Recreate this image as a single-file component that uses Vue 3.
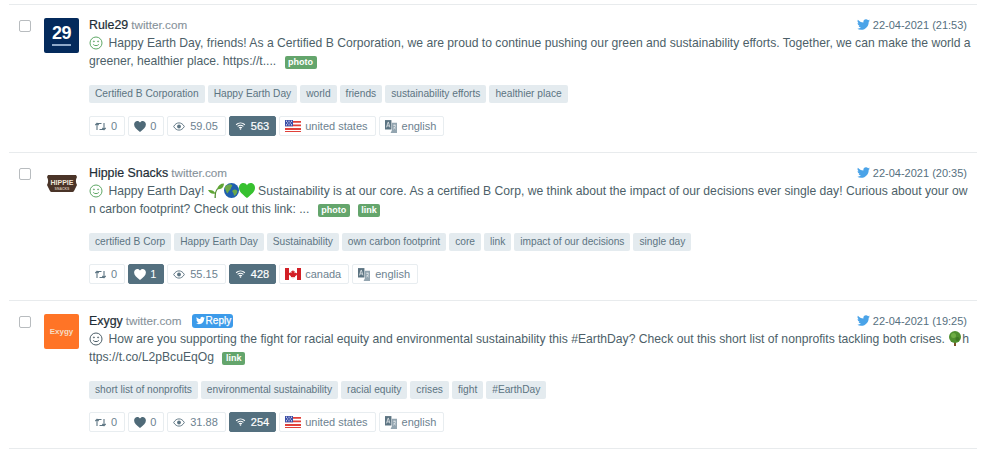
<template>
  <div class="feed">
    <div v-for="post in posts" :key="post.name" class="post">
      <span class="check"></span>
      <div class="avatar" :class="post.logo">
        <template v-if="post.logo === 'rule'">
          <b>29</b><i></i>
        </template>
        <svg v-else-if="post.logo === 'hippie'" width="30" height="17" viewBox="0 0 30 17">
          <path d="M1 0h28l1 2c-1.500 3-1.500 5 0 8l-3 6c-.3.600-.8 1-1.500 1h-21c-.7 0-1.200-.4-1.500-1L0 10c1.500-3 1.500-5 0-8z" fill="#4a3428" />
          <text x="15" y="10" text-anchor="middle" class="hippie-big">HIPPIE</text>
          <text x="15" y="14.500" text-anchor="middle" class="hippie-small">SNACKS</text>
        </svg>
        <b v-else>Exygy</b>
      </div>
      <div class="body">
        <div class="head">
          <div class="source">
            <strong>{{ post.name }}</strong>
            <span class="domain">twitter.com</span>
            <span v-if="post.reply" class="reply">
              <svg width="9" height="9" viewBox="0 0 24 24"><path :d="birdPath" fill="#fff" /></svg>
              Reply
            </span>
          </div>
          <div class="date">
            <svg width="13" height="13" viewBox="0 0 24 24"><path :d="birdPath" fill="#4aa3e8" /></svg>
            {{ post.date }}
          </div>
        </div>
        <p class="text">
          <svg class="mood" :class="{ neutral: post.neutral }" width="14" height="14" viewBox="0 0 14 14" fill="none" stroke="currentColor">
            <circle cx="7" cy="7" r="6" />
            <circle cx="4.900" cy="5.400" r=".5" />
            <circle cx="9.100" cy="5.400" r=".5" />
            <path d="M4.200 8.400c.9 1.600 4.700 1.600 5.600 0" />
          </svg>
          <template v-for="(part, i) in post.text" :key="i">
            <svg v-if="part === 'sprout'" class="emoji" width="16" height="15" viewBox="0 0 16 15">
              <path d="M6.500 15C6.500 11 7 8 9 5.500l1 .6C8 8.500 7.800 11 7.800 15z" fill="#4d8a2c" />
              <path d="M9 6c1-3.500 3.500-5.500 7-5.500-.2 3.500-2.500 6.500-7 5.500z" fill="#5fa535" />
              <path d="M7.500 10.500C6 7.500 3.500 6.500 0 7c1.500 3 4 4.500 7.500 3.500z" fill="#5fa535" />
            </svg>
            <svg v-else-if="part === 'globe'" class="emoji" width="15" height="15" viewBox="0 0 15 15">
              <circle cx="7.500" cy="7.500" r="7.500" fill="#1f5fae" />
              <path d="M3 2c2-1 4-1 5 0 1 1-1 2-1 3s-1 2-2 3-1 3-2 2-1-3-2-4 0-3 2-4zM9 7c1.500-1 3-.5 4 .5s-.5 4-2 5-1-2-2-3-1-1.500 0-2.500z" fill="#6aa84a" />
            </svg>
            <svg v-else-if="part === 'heart'" class="emoji" width="16" height="15" viewBox="0 0 15 14">
              <path d="M7.500 14C3 10.500 0 8 0 4.400 0 1.800 2 0 4.100 0c1.500 0 2.700.8 3.400 2C8.200.8 9.400 0 10.900 0 13 0 15 1.800 15 4.400 15 8 12 10.500 7.500 14z" fill="#37c12f" />
            </svg>
            <svg v-else-if="part === 'tree'" class="emoji tree" width="14" height="15" viewBox="0 0 14 15">
              <path d="M6 9h2v6H6z" fill="#7a4f26" />
              <circle cx="7" cy="6" r="6" fill="#4f8f2f" />
              <circle cx="5.500" cy="4.500" r="2.500" fill="#6fae45" />
              <circle cx="9.500" cy="8" r="2" fill="#3f7a25" />
            </svg>
            <template v-else>{{ part }}</template>
          </template>
          <span v-for="label in post.labels" :key="label" class="label">{{ label }}</span>
        </p>
        <div class="tags">
          <span v-for="tag in post.tags" :key="tag" class="tag">{{ tag }}</span>
        </div>
        <div class="stats">
          <span class="stat">
            <svg width="11" height="9" viewBox="0 0 11 9" fill="none" stroke="currentColor" stroke-width="1.100">
              <path d="M2 8V1.500h4.500M.3 3 2 1.200 3.700 3M9 1v6.500H4.500M7.300 6 9 7.800 10.700 6" />
            </svg>
            <span class="num">{{ post.shares }}</span>
          </span>
          <span class="stat likes" :class="{ active: post.likes > 0 }">
            <svg class="like" width="12" height="11" viewBox="0 0 15 14"><path d="M7.500 14C3 10.500 0 8 0 4.400 0 1.800 2 0 4.100 0c1.500 0 2.700.8 3.400 2C8.200.8 9.400 0 10.900 0 13 0 15 1.800 15 4.400 15 8 12 10.500 7.500 14z" fill="currentColor" /></svg>
            <span class="num">{{ post.likes }}</span>
          </span>
          <span class="stat">
            <svg width="12" height="9" viewBox="0 0 14 10" fill="none" stroke="currentColor" stroke-width="1.100">
              <path d="M.8 5C2.500 2 4.600.8 7 .8S11.500 2 13.200 5C11.500 8 9.400 9.200 7 9.200S2.500 8 .8 5z" />
              <circle cx="7" cy="5" r="2.200" fill="currentColor" stroke="none" />
            </svg>
            <span class="num">{{ post.views }}</span>
          </span>
          <span class="stat active reach">
            <svg width="11" height="8" viewBox="0 0 14 11" fill="none" stroke="currentColor" stroke-width="1.500">
              <path d="M1 3.800C4.500.6 9.500.6 13 3.800M3 6c2.500-2 5.500-2 8 0M5 8c1.200-.8 2.800-.8 4 0" />
              <circle cx="7" cy="9.700" r="1.100" fill="currentColor" stroke="none" />
            </svg>
            <span class="num">{{ post.reach }}</span>
          </span>
          <span class="stat country">
            <svg v-if="post.country === 'canada'" width="16" height="12" viewBox="0 0 16 12">
              <path d="M0 0h16v12H0z" fill="#fff" />
              <path d="M0 0h4v12H0zM12 0h4v12h-4z" fill="#d21f26" />
              <path d="M8 2l.8 1.500 1-.4-.4 2.200 1.300-.9.300.8 1.200-.2-.4 1.400.5.300L10 8.300l.2 1-2-.2V10.500h-.4V9.100l-2 .2.200-1L3.700 6.500l.5-.3-.4-1.400 1.200.2.300-.8 1.300.9-.4-2.200 1 .4z" fill="#d21f26" />
            </svg>
            <svg v-else width="16" height="12" viewBox="0 0 16 12">
              <path d="M0 0h16v12H0z" fill="#fff" />
              <path d="M0 .9h16v1.800H0zM0 4.500h16v1.800H0zM0 8.100h16v1.800H0zM0 11h16v1H0z" fill="#e0413a" />
              <path d="M0 0h8v6.300H0z" fill="#3c4fa8" />
              <path d="M1 1.200h1M3.500 1.200h1M6 1.200h1M2.200 3h1M4.700 3h1M1 4.800h1M3.500 4.800h1M6 4.800h1" stroke="#fff" />
            </svg>
            <span class="num">{{ post.country }}</span>
          </span>
          <span class="stat">
            <svg width="12" height="13" viewBox="0 0 14 15">
              <path d="M0 0h7.500v11H0z" fill="#5c7482" />
              <path d="M8 3h6v12H6.500L8 12z" fill="#93a5b0" />
              <path d="M1.800 8.500 3.500 2.500h.5L5.700 8.500M2.500 6.800h2.500" stroke="#fff" fill="none" stroke-width=".8" />
              <path d="M9.500 6h3M11 5.500v1M9.800 10.500c1.400-.8 2.200-2.200 2.400-4M10.200 8c.5 1 1.300 1.900 2.300 2.500" stroke="#fff" fill="none" stroke-width=".7" />
            </svg>
            <span class="num">english</span>
          </span>
        </div>
      </div>
    </div>
  </div>
</template>

<script setup>
const birdPath =
  'M23.950 4.570a10 10 0 0 1-2.820.770 4.960 4.960 0 0 0 2.160-2.720c-.950.550-2 .950-3.130 1.190a4.920 4.920 0 0 0-8.380 4.480C7.690 8.090 4.070 6.130 1.640 3.160a4.820 4.820 0 0 0-.670 2.480c0 1.710.870 3.210 2.190 4.100a4.900 4.900 0 0 1-2.230-.620v.060a4.920 4.920 0 0 0 3.950 4.830 4.940 4.940 0 0 1-2.210.080 4.940 4.940 0 0 0 4.600 3.420A9.870 9.870 0 0 1 0 19.540a14 14 0 0 0 7.560 2.210c9.050 0 14-7.500 14-13.980 0-.210 0-.420-.010-.630a9.940 9.940 0 0 0 2.400-2.550z'

const posts = [
  {
    name: 'Rule29',
    logo: 'rule',
    date: '22-04-2021 (21:53)',
    text: [' Happy Earth Day, friends! As a Certified B Corporation, we are proud to continue pushing our green and sustainability efforts. Together, we can make the world a greener, healthier place. https://t.... '],
    labels: ['photo'],
    tags: ['Certified B Corporation', 'Happy Earth Day', 'world', 'friends', 'sustainability efforts', 'healthier place'],
    shares: 0,
    likes: 0,
    views: '59.05',
    reach: 563,
    country: 'united states'
  },
  {
    name: 'Hippie Snacks',
    logo: 'hippie',
    date: '22-04-2021 (20:35)',
    text: [' Happy Earth Day! ', 'sprout', 'globe', 'heart', ' Sustainability is at our core. As a certified B Corp, we think about the impact of our decisions ever single day! Curious about your own carbon footprint? Check out this link: ... '],
    labels: ['photo', 'link'],
    tags: ['certified B Corp', 'Happy Earth Day', 'Sustainability', 'own carbon footprint', 'core', 'link', 'impact of our decisions', 'single day'],
    shares: 0,
    likes: 1,
    views: '55.15',
    reach: 428,
    country: 'canada'
  },
  {
    name: 'Exygy',
    logo: 'exygy',
    reply: true,
    neutral: true,
    date: '22-04-2021 (19:25)',
    text: [' How are you supporting the fight for racial equity and environmental sustainability this #EarthDay? Check out this short list of nonprofits tackling both crises. ', 'tree', 'https://t.co/L2pBcuEqOg '],
    labels: ['link'],
    tags: ['short list of nonprofits', 'environmental sustainability', 'racial equity', 'crises', 'fight', '#EarthDay'],
    shares: 0,
    likes: 0,
    views: '31.88',
    reach: 254,
    country: 'united states'
  }
]
</script>

<style scoped>
.feed {
  width: 968px;
  margin: 4px 0 0 9px;
  border-bottom: 1px solid #e8ebed;
  font-family: "Liberation Sans", Arial, sans-serif;
  color: #4d5f69;
}

.post {
  display: flex;
  box-sizing: border-box;
  height: 148px;
  padding-top: 13px;
  border-top: 1px solid #e8ebed;
}

.check {
  flex: none;
  width: 10px;
  height: 10px;
  margin: 2px 13px 0 10px;
  border: 1px solid #b8bcbf;
  border-radius: 2px;
  background: #fff;
}

.avatar {
  flex: none;
  display: flex;
  flex-direction: column;
  align-items: center;
  justify-content: center;
  width: 35px;
  height: 35px;
  margin-right: 10px;
  border-radius: 2px;
}

.avatar.rule {
  background: #042a5c;
  color: #fff;
}

.avatar.rule b {
  font-size: 18px;
  line-height: 17px;
  letter-spacing: -0.5px;
}

.avatar.rule i {
  width: 19px;
  height: 2px;
  margin-top: 2px;
  background: #8fa9c9;
}

.hippie-big {
  fill: #efe6da;
  font-size: 7px;
  font-weight: 700;
}

.hippie-small {
  fill: #cdbfae;
  font-size: 3.500px;
  font-weight: 700;
}

.avatar.exygy {
  background: #ff7426;
  color: #f6dcc4;
  font-size: 8px;
}

.body {
  flex: 1;
  min-width: 0;
}

.head {
  display: flex;
  justify-content: space-between;
  align-items: center;
  height: 15px;
  margin-top: -1px;
}

.source {
  display: flex;
  align-items: center;
  gap: 3px;
  font-size: 12.400px;
}

.source strong {
  font-weight: 400;
  color: #1e2d36;
  -webkit-text-stroke: 0.2px #1e2d36;
}

.domain {
  font-size: 11.700px;
  color: #87929a;
  -webkit-text-stroke: 0.1px #87929a;
}

.reply {
  display: inline-flex;
  align-items: center;
  gap: 1px;
  height: 14px;
  margin-left: 7px;
  padding: 0 2px 0 4px;
  border-radius: 3px;
  background: #3c9bea;
  color: #fff;
  font-size: 10px;
  -webkit-text-stroke: 0.25px #fff;
}

.date {
  display: flex;
  align-items: center;
  gap: 3px;
  margin-right: 10px;
  font-size: 11px;
  color: #567080;
}

.text {
  width: 883px;
  margin: 2px 0 0;
  font-size: 12.170px;
  line-height: 18px;
  word-break: break-all;
}

.mood {
  margin-right: 2px;
  vertical-align: -3px;
  color: #5fa866;
}

.mood.neutral {
  color: #4d5f69;
}

.emoji {
  vertical-align: -3px;
}

.label {
  display: inline-block;
  height: 13px;
  margin: 0 3px 0 5px;
  padding: 0 3.500px;
  border-radius: 2px;
  background: #64a56c;
  color: #fff;
  font-size: 9px;
  font-weight: 700;
  line-height: 13px;
  vertical-align: 0;
}

.tags {
  display: flex;
  gap: 3px;
  margin-top: 15px;
}

.tag {
  height: 18px;
  padding: 0 6px;
  border-radius: 2px;
  background: #e4ebef;
  color: #5c7482;
  font-size: 10.200px;
  line-height: 18px;
}

.stats {
  display: flex;
  gap: 3px;
  margin-top: 13px;
}

.stat {
  display: flex;
  align-items: center;
  gap: 5px;
  height: 18px;
  padding: 0 7px 0 5px;
  border: 1px solid #e8edf0;
  border-radius: 2px;
  font-size: 11px;
  color: #5c7482;
}

.stat.likes,
.stat.country {
  gap: 4px;
}

.num {
  color: #6d8290;
}

.like {
  color: #4f6a78;
}

.stat.active {
  border-color: #54707f;
  background: #54707f;
  color: #fff;
}

.stat.active .num,
.stat.active .like {
  color: #fff;
}

.reach {
  padding-right: 6px;
}

.reach .num {
  -webkit-text-stroke: 0.2px #fff;
}
</style>
